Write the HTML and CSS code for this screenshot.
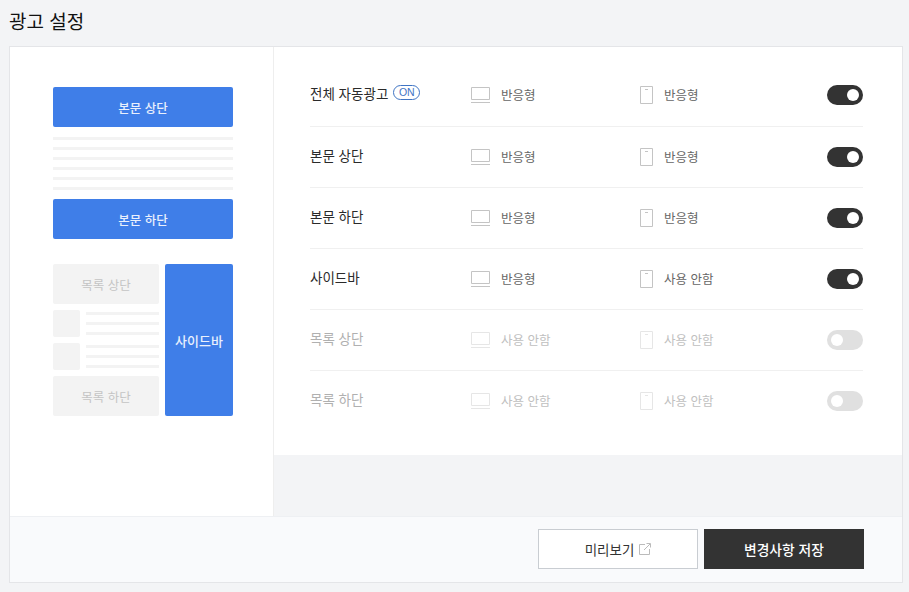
FILE: index.html
```html
<!DOCTYPE html>
<html lang="ko">
<head>
<meta charset="utf-8">
<title>광고 설정</title>
<link rel="stylesheet" href="styles.css">
</head>
<body>
<h1 class="title">광고 설정</h1>
<section class="panel">
  <div class="main">
    <aside class="preview">
      <div class="block blue">본문 상단</div>
      <div class="lines wide"><i></i><i></i><i></i><i></i><i></i><i></i></div>
      <div class="block blue">본문 하단</div>
      <div class="list-area">
        <div class="list-col">
          <div class="block gray">목록 상단</div>
          <div class="item"><span class="thumb"></span><div class="lines"><i></i><i></i><i></i></div></div>
          <div class="item"><span class="thumb"></span><div class="lines"><i></i><i></i><i></i></div></div>
          <div class="block gray">목록 하단</div>
        </div>
        <div class="block blue side">사이드바</div>
      </div>
    </aside>
    <div class="settings">
      <ul class="rows">
        <li class="row">
          <div class="name">전체 자동광고<span class="badge">ON</span></div>
          <div class="opt pc"><svg class="ico-pc" viewBox="0 0 19 16"><path d="M.5.5h18v12H.5z"/><path d="M0 15.5h19"/></svg><span>반응형</span></div>
          <div class="opt mo"><svg class="ico-mo" viewBox="0 0 13 18"><path d="M.5.5h12v17H.5z"/><path d="M5 3.5h3"/></svg><span>반응형</span></div>
          <span class="toggle on"></span>
        </li>
        <li class="row">
          <div class="name">본문 상단</div>
          <div class="opt pc"><svg class="ico-pc" viewBox="0 0 19 16"><path d="M.5.5h18v12H.5z"/><path d="M0 15.5h19"/></svg><span>반응형</span></div>
          <div class="opt mo"><svg class="ico-mo" viewBox="0 0 13 18"><path d="M.5.5h12v17H.5z"/><path d="M5 3.5h3"/></svg><span>반응형</span></div>
          <span class="toggle on"></span>
        </li>
        <li class="row">
          <div class="name">본문 하단</div>
          <div class="opt pc"><svg class="ico-pc" viewBox="0 0 19 16"><path d="M.5.5h18v12H.5z"/><path d="M0 15.5h19"/></svg><span>반응형</span></div>
          <div class="opt mo"><svg class="ico-mo" viewBox="0 0 13 18"><path d="M.5.5h12v17H.5z"/><path d="M5 3.5h3"/></svg><span>반응형</span></div>
          <span class="toggle on"></span>
        </li>
        <li class="row">
          <div class="name">사이드바</div>
          <div class="opt pc"><svg class="ico-pc" viewBox="0 0 19 16"><path d="M.5.5h18v12H.5z"/><path d="M0 15.5h19"/></svg><span>반응형</span></div>
          <div class="opt mo"><svg class="ico-mo" viewBox="0 0 13 18"><path d="M.5.5h12v17H.5z"/><path d="M5 3.5h3"/></svg><span>사용 안함</span></div>
          <span class="toggle on"></span>
        </li>
        <li class="row off">
          <div class="name">목록 상단</div>
          <div class="opt pc"><svg class="ico-pc" viewBox="0 0 19 16"><path d="M.5.5h18v12H.5z"/><path d="M0 15.5h19"/></svg><span>사용 안함</span></div>
          <div class="opt mo"><svg class="ico-mo" viewBox="0 0 13 18"><path d="M.5.5h12v17H.5z"/><path d="M5 3.5h3"/></svg><span>사용 안함</span></div>
          <span class="toggle"></span>
        </li>
        <li class="row off">
          <div class="name">목록 하단</div>
          <div class="opt pc"><svg class="ico-pc" viewBox="0 0 19 16"><path d="M.5.5h18v12H.5z"/><path d="M0 15.5h19"/></svg><span>사용 안함</span></div>
          <div class="opt mo"><svg class="ico-mo" viewBox="0 0 13 18"><path d="M.5.5h12v17H.5z"/><path d="M5 3.5h3"/></svg><span>사용 안함</span></div>
          <span class="toggle"></span>
        </li>
      </ul>
    </div>
  </div>
  <footer class="foot">
    <button class="btn ghost" type="button">미리보기<svg class="ico-ext" viewBox="0 0 12 12"><path d="M6 1.5H.5v10h10V6"/><path d="M5 7 11 1M7.5.5h4v4"/></svg></button>
    <button class="btn dark" type="button">변경사항 저장</button>
  </footer>
</section>
</body>
</html>
```
FILE: styles.css
```css
* { box-sizing: border-box; }
html, body { margin: 0; padding: 0; }
body {
  width: 909px;
  height: 592px;
  padding: 0 6px 9px 9px;
  background: #f3f4f6;
  color: #222;
  font-family: "Noto Sans CJK KR", "Noto Sans", sans-serif;
  overflow: hidden;
}
.title {
  margin: 0;
  height: 46px;
  padding-top: 7px;
  font-size: 19px;
  line-height: 28px;
  font-weight: 400;
  color: #111;
}
.panel {
  height: 537px;
  border: 1px solid #e4e5e8;
  background: #f9fafc;
}
.main {
  display: flex;
  height: 470px;
  background: #f3f4f6;
  border-bottom: 1px solid #eef0f3;
}
.preview {
  flex: 0 0 264px;
  height: 100%;
  padding: 40px 40px 0 43px;
  background: #fff;
  border-right: 1px solid #eeeeee;
}
.block {
  display: flex;
  align-items: center;
  justify-content: center;
  height: 40px;
  border-radius: 2px;
  font-size: 12.5px;
  font-weight: 500;
}
.blue { background: #3f7ee8; color: #e9f0fd; }
.gray { background: #f3f3f3; color: #c4c4c4; font-weight: 400; }
.lines { display: flex; flex-direction: column; gap: 7px; }
.lines i { display: block; height: 3px; background: #f3f3f3; }
.lines.wide { margin: 10px 0 9px; }
.list-area { display: flex; gap: 6px; margin-top: 25px; height: 152px; }
.list-col { flex: 0 0 106px; display: flex; flex-direction: column; gap: 6px; }
.side { flex: 1; height: 100%; font-size: 13px; }
.item { display: flex; gap: 6px; height: 27px; }
.thumb { flex: 0 0 27px; height: 27px; background: #f3f3f3; border-radius: 2px; }
.item .lines { flex: 1; padding-top: 2px; }
.settings { flex: 1; height: 408px; padding: 18px 39px 0 36px; background: #fff; }
.rows { list-style: none; margin: 0; padding: 0; }
.row {
  display: flex;
  align-items: center;
  height: 61px;
  border-bottom: 1px solid #f0f0f0;
  font-size: 13.5px;
}
.row:first-child { height: 62px; padding-bottom: 1px; }
.row:last-child { border-bottom-color: transparent; }
.name { flex: 0 0 161px; display: flex; align-items: center; color: #2a2a2a; margin-top: -5px; }
.badge {
  margin-left: 5px;
  width: 27px;
  height: 15px;
  border: 1px solid #3f74c4;
  border-radius: 8px;
  color: #3f74c4;
  font-family: "Liberation Sans", sans-serif;
  font-size: 10.5px;
  line-height: 13px;
  text-align: center;
}
.opt { display: flex; align-items: center; color: #666; }
.opt span { font-size: 12.5px; margin-top: -2px; }
.pc { flex: 0 0 169px; gap: 11px; }
.mo { flex: 1; gap: 11px; }
.ico-pc { width: 19px; height: 16px; }
.ico-mo { width: 13px; height: 18px; }
.opt svg { fill: none; stroke: #c4c4c4; stroke-width: 1; }
.toggle {
  position: relative;
  flex: 0 0 36px;
  height: 20px;
  border-radius: 10px;
  background: #e0e0e0;
}
.toggle::after {
  content: "";
  position: absolute;
  top: 4px;
  left: 4px;
  width: 12px;
  height: 12px;
  border-radius: 50%;
  background: #fff;
}
.toggle.on { background: #333; }
.toggle.on::after { left: 20px; }
.off .name { color: #b0b0b0; }
.off .opt span { color: #c0c0c0; }
.off .opt svg { stroke: #e6e6e6; }
.foot {
  display: flex;
  justify-content: flex-end;
  gap: 6px;
  padding: 12px 38px 0 0;
}
.btn {
  display: flex;
  align-items: center;
  justify-content: center;
  width: 160px;
  height: 40px;
  font-family: inherit;
  font-size: 13.5px;
  padding: 0;
}
.ghost { background: #fff; border: 1px solid #c9cdd2; color: #333; gap: 5px; }
.dark { background: #333; border: 0; color: #fff; font-weight: 500; font-size: 13.8px; }
.ico-ext { width: 12px; height: 12px; fill: none; stroke: #bbb; stroke-width: 1; }
```
